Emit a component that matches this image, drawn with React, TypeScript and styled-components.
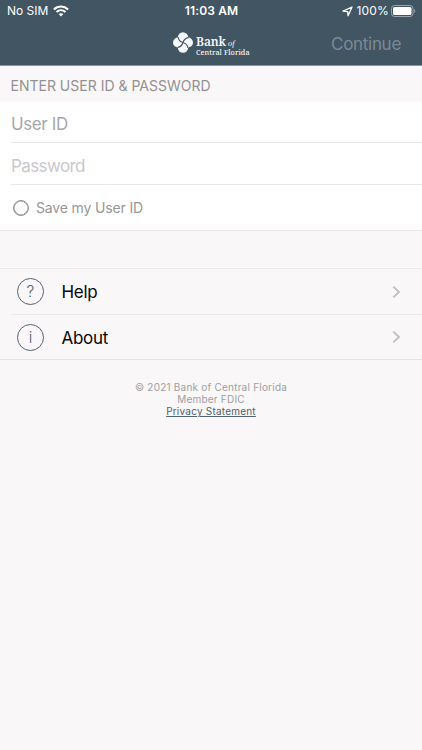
import React from "react";
import styled, { createGlobalStyle } from "styled-components";

const GlobalStyle = createGlobalStyle`
  * { box-sizing: border-box; }
  body {
    margin: 0;
    background: #f9f7f8;
    font-family: Inter, "Liberation Sans", sans-serif;
  }
`;

const Screen = styled.main`
  width: 422px;
  height: 750px;
  overflow: hidden;
  background: #f9f7f8;
`;

const Text = styled.span<{ $size: number; $spacing?: number; $color?: string; $weight?: number }>`
  font-size: ${(p) => p.$size}px;
  letter-spacing: ${(p) => p.$spacing ?? 0}px;
  color: ${(p) => p.$color ?? "inherit"};
  font-weight: ${(p) => p.$weight ?? 400};
  white-space: nowrap;
`;

const Header = styled.header`
  height: 66px;
  background: #425563;
  border-bottom: 1px solid #8a949f;
  color: #fff;
`;

const StatusBar = styled.div`
  height: 22px;
  display: grid;
  grid-template-columns: 1fr auto 1fr;
  align-items: center;
  padding: 0 6px 0 7px;
  line-height: 22px;
`;

const StatusGroup = styled.div<{ $end?: boolean }>`
  display: flex;
  align-items: center;
  justify-content: ${(p) => (p.$end ? "flex-end" : "flex-start")};
  gap: ${(p) => (p.$end ? 3 : 5)}px;
  svg { display: block; flex: none; }
  span + svg { margin-left: ${(p) => (p.$end ? -1 : 0)}px; }
`;

const NavBar = styled.nav`
  height: 43px;
  display: flex;
  align-items: center;
  justify-content: space-between;
  padding: 0 21px 0 173px;
`;

const Brand = styled.div`
  display: flex;
  gap: 3px;
  height: 23px;
  svg { display: block; }
`;

const Wordmark = styled.div`
  display: flex;
  flex-direction: column;
  font-family: "Noto Serif", "DejaVu Serif", serif;
  color: #f6f8f9;
  padding-top: 4px;
`;

const BankLine = styled.div`
  display: flex;
  align-items: baseline;
  gap: 2px;
  height: 11px;
  line-height: 12px;
  font-size: 12px;
  font-weight: 600;
  letter-spacing: -0.1px;
  white-space: nowrap;
  em {
    font: italic 400 8.5px/9px "Liberation Serif", serif;
    letter-spacing: 0;
  }
`;

const RegionLine = styled.div`
  height: 9px;
  line-height: 9px;
  padding-top: 1px;
  font-size: 7.2px;
  font-weight: 500;
  letter-spacing: 0.06px;
  white-space: nowrap;
`;

const SectionTitle = styled.h2`
  height: 36px;
  margin: 0;
  padding: 2px 0 0 10.5px;
  line-height: 36px;
  font-size: 14px;
  font-weight: 400;
  letter-spacing: 0;
  color: #939194;
`;

const Form = styled.section`
  height: 129px;
  background: #fff;
  border-bottom: 1px solid #e9e7e9;
`;

const Field = styled.div<{ $height: number }>`
  height: ${(p) => p.$height}px;
  margin-left: 11px;
  display: flex;
  align-items: center;
  border-bottom: 1px solid #e9e8ea;
  padding-top: 4px;
`;

const SaveRow = styled.label`
  height: 45px;
  display: flex;
  align-items: center;
  padding-left: 13px;
  gap: 7px;
  line-height: 16px;
`;

const Radio = styled.span`
  width: 16px;
  height: 16px;
  border: 1.5px solid #8e8e90;
  border-radius: 50%;
  box-shadow: inset 0 0 0 0.5px #8e8e90;
`;

const Menu = styled.section`
  margin-top: 37px;
  border-top: 1px solid #edebed;
  border-bottom: 1px solid #e4e2e4;
`;

const MenuRow = styled.div`
  height: 46px;
  display: flex;
  align-items: center;
  margin-left: 11px;
  padding: 0 21px 0 6px;
  & + & { height: 44px; }
  &:first-child { border-bottom: 1px solid #eae8ea; }
  svg { display: block; }
`;

const Badge = styled.span`
  width: 27px;
  height: 27px;
  margin-right: 17.5px;
  border: 1.25px solid #53636f;
  border-radius: 50%;
  display: flex;
  align-items: center;
  justify-content: center;
  font-size: 15.5px;
  font-weight: 300;
  color: #53636f;
`;

const Label = styled.span`
  flex: 1;
  font-size: 17px;
  letter-spacing: -0.3px;
  line-height: 22px;
  padding-top: 1px;
  color: #080808;
`;

const Footer = styled.footer`
  margin-top: 21px;
  display: flex;
  flex-direction: column;
  align-items: center;
  font-size: 10px;
  line-height: 12px;
  letter-spacing: 0.22px;
  color: #a09ea1;
`;

const PrivacyLink = styled.a`
  color: #52626f;
  text-decoration: underline;
  text-underline-offset: 1px;
`;

const Wifi = () => (
  <svg width="16" height="12" viewBox="0 0 16 12" fill="none" stroke="#fff">
    <path d="M.9 4.4C4.9.6 11.1.6 15.1 4.4" strokeWidth="2.1" />
    <path d="M3.5 7.1C6.1 4.7 9.9 4.7 12.5 7.1" strokeWidth="2" />
    <path d="M8 11.5 5.6 9.1C7 7.9 9 7.9 10.4 9.1Z" fill="#fff" stroke="none" />
  </svg>
);

const Location = () => (
  <svg width="11" height="11" viewBox="0 0 11 11" fill="none" stroke="#fff" strokeWidth="1.3" strokeLinejoin="round">
    <path d="M10 1 6.1 9.7 5.6 5.6 1 5.2Z" />
  </svg>
);

const Battery = () => (
  <svg width="25" height="12" viewBox="0 0 25 12">
    <rect x=".5" y=".5" width="21.5" height="11" rx="3" fill="none" stroke="#9aa5ae" />
    <rect x="2" y="2" width="18.5" height="8" rx="1.6" fill="#fff" />
    <path d="M23.2 4v4c1.5-.6 1.5-3.4 0-4Z" fill="#9aa5ae" />
  </svg>
);

const Emblem = () => (
  <svg width="20" height="21" viewBox="-10 -10.5 20 21">
    <g fill="#f6f8f9">
      <circle cx="0" cy="-5.1" r="5.2" />
      <circle cx="4.9" cy="0" r="5.1" />
      <circle cx="0" cy="5.1" r="5.2" />
      <circle cx="-4.9" cy="0" r="5.1" />
    </g>
    <g fill="none" stroke="#425563" strokeWidth="1.1">
      {[0, 90, 180, 270].map((angle) => (
        <path key={angle} d="M0 0C.8-2.7 2.6-4.5 5.4-4.9" transform={`rotate(${angle})`} />
      ))}
    </g>
  </svg>
);

const Chevron = () => (
  <svg width="9" height="14" viewBox="0 0 9 14" fill="none" stroke="#c1bfc2" strokeWidth="1.9">
    <path d="M1.3 1.6 7 7 1.3 12.4" />
  </svg>
);

const items = [
  { glyph: "?", label: "Help" },
  { glyph: "i", label: "About" },
];

export default function App() {
  return (
    <>
      <GlobalStyle />
      <Screen>
        <Header>
          <StatusBar>
            <StatusGroup>
              <Text $size={12}>No SIM</Text>
              <Wifi />
            </StatusGroup>
            <Text $size={12} $weight={600} $spacing={0.15}>11:03 AM</Text>
            <StatusGroup $end>
              <Location />
              <Text $size={12} $spacing={0.2}>100%</Text>
              <Battery />
            </StatusGroup>
          </StatusBar>
          <NavBar>
            <Brand>
              <Emblem />
              <Wordmark>
                <BankLine><span>Bank</span><em>of</em></BankLine>
                <RegionLine>Central Florida</RegionLine>
              </Wordmark>
            </Brand>
            <Text $size={17} $spacing={-0.3} $color="#7c8995">Continue</Text>
          </NavBar>
        </Header>
        <SectionTitle>ENTER USER ID &amp; PASSWORD</SectionTitle>
        <Form>
          <Field $height={41}>
            <Text $size={17} $spacing={-0.4} $color="#a7a7a9">User ID</Text>
          </Field>
          <Field $height={42}>
            <Text $size={17} $spacing={-0.6} $color="#c8c8cb">Password</Text>
          </Field>
          <SaveRow>
            <Radio />
            <Text $size={14} $spacing={-0.15} $color="#969698">Save my User ID</Text>
          </SaveRow>
        </Form>
        <Menu>
          {items.map((item) => (
            <MenuRow key={item.label}>
              <Badge>{item.glyph}</Badge>
              <Label>{item.label}</Label>
              <Chevron />
            </MenuRow>
          ))}
        </Menu>
        <Footer>
          <span>© 2021 Bank of Central Florida</span>
          <span>Member FDIC</span>
          <PrivacyLink>Privacy Statement</PrivacyLink>
        </Footer>
      </Screen>
    </>
  );
}
